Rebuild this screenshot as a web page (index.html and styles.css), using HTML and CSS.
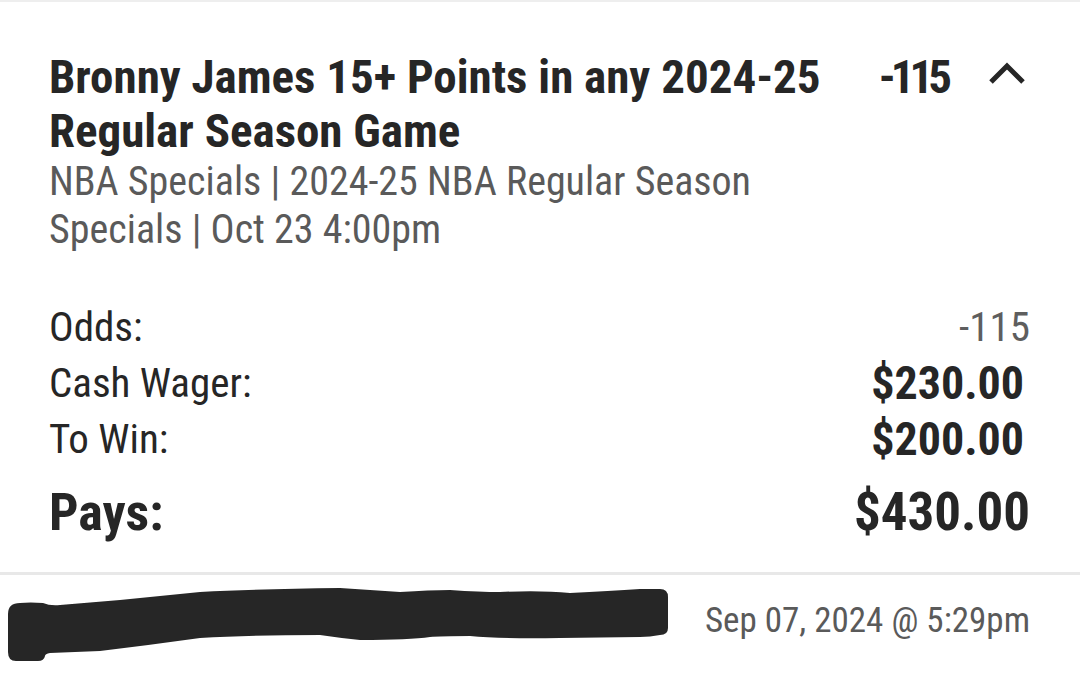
FILE: index.html
```html
<!DOCTYPE html>
<html>
<head>
<meta charset="utf-8">
<link rel="stylesheet" href="styles.css">
</head>
<body>
<div class="card">
  <div class="head">
    <div class="titles">
      <div class="title">Bronny James 15+ Points in any 2024-25 Regular Season Game</div>
      <div class="sub">NBA Specials | 2024-25 NBA Regular Season Specials | Oct 23 4:00pm</div>
    </div>
    <div class="price">-115</div>
    <svg class="chev" width="40" height="24" viewBox="0 0 40 24"><path d="M4 20 L20 4 L36 20" fill="none" stroke="#262626" stroke-width="5"/></svg>
  </div>
  <div class="rows">
    <div class="row"><span class="lbl">Odds:</span><span class="val odds">-115</span></div>
    <div class="row"><span class="lbl">Cash Wager:</span><span class="val money">$230.00</span></div>
    <div class="row"><span class="lbl">To Win:</span><span class="val money">$200.00</span></div>
    <div class="row pays"><span class="lbl">Pays:</span><span class="val">$430.00</span></div>
  </div>
</div>
<div class="foot">
  <svg class="redact" width="672" height="80" viewBox="0 585 672 80"><path d="M20 603 Q30 602 43 603 Q50 606 60 605 L120 600 Q160 596 200 592 Q260 589 340 588 Q370 590 400 592 Q430 590 450 590 Q480 592 500 592 Q540 590 570 593 Q610 591 640 589 L660 589 Q668 589 668 597 L668 628 Q668 635 660 635 Q650 637 640 637 L560 638 Q500 639 470 636 Q440 636 430 637 Q410 640 360 640 Q340 638 320 635 Q250 635 200 638 Q150 645 100 651 L50 653 Q45 654 45 656 Q44 661 38 661 L16 661 Q8 661 8 652 L8 614 Q8 603 20 603 Z" fill="#262626"/></svg>
  <div class="date">Sep 07, 2024 @ 5:29pm</div>
</div>
</body>
</html>
```
FILE: styles.css
```css
html, body { margin: 0; padding: 0; background: #fff; }
body {
  width: 1080px;
  height: 691px;
  overflow: hidden;
  font-family: "Roboto Condensed", "Roboto", "Liberation Sans Narrow", sans-serif;
  font-stretch: 75%;
  color: #262626;
  border-top: 2px solid #eeeeee;
  box-sizing: border-box;
}
.card { padding: 48px 50px 0 49px; }
.head { display: flex; align-items: flex-start; }
.titles { flex: 1; }
.title { font-size: 47px; font-weight: 700; line-height: 54px; width: 800px; }
.sub { font-size: 40px; line-height: 48px; color: #5a5a5a; width: 720px; }
.price { font-size: 47px; font-weight: 700; line-height: 54px; letter-spacing: -5px; margin-right: 40px; }
.chev { margin-top: 12px; margin-right: 3px; }
.rows { margin-top: 45px; }
.row { display: flex; justify-content: space-between; align-items: center; height: 56px; }
.lbl { font-size: 41px; }
.val { font-size: 46px; font-weight: 700; }
.odds { font-size: 41px; font-weight: 400; color: #5e5e5e; }
.money { margin-right: 6px; }
.pays { height: 90px; }
.pays .lbl { font-size: 52px; font-weight: 700; }
.pays .val { font-size: 53px; font-weight: 700; }
.foot {
  margin-top: 15px;
  border-top: 3px solid #e8e8e8;
  display: flex;
  justify-content: space-between;
  align-items: flex-start;
  height: 90px;
  padding-right: 50px;
}
.redact { display: block; margin-top: 10px; }
.date { align-self: center; font-size: 35px; color: #5a5a5a; }
```
